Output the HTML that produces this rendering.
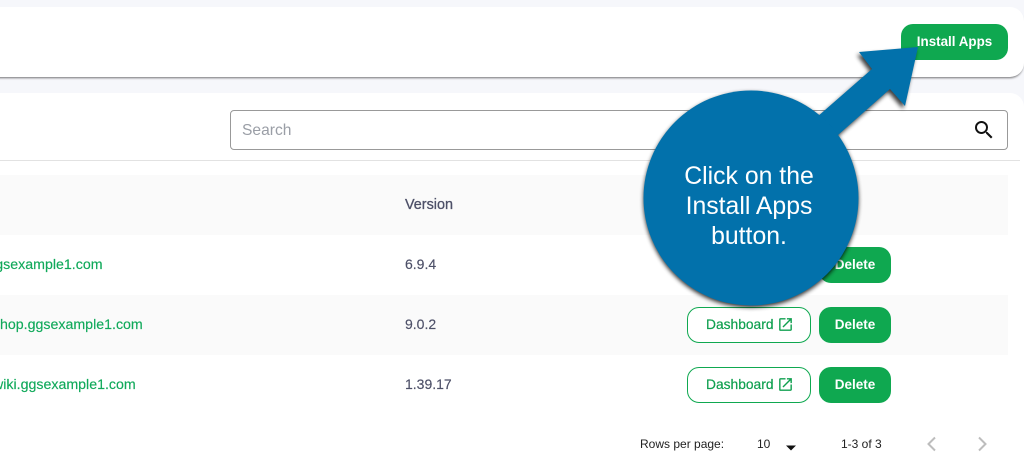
<!DOCTYPE html>
<html><head><meta charset="utf-8"><style>
html,body{margin:0;padding:0}
body{width:1024px;height:456px;overflow:hidden;background:#f6f7fb;position:relative;font-family:"Liberation Sans",sans-serif;font-size:14px}
div,span{position:absolute;box-sizing:border-box;white-space:nowrap}
.card{background:#fff}
.row{left:0;width:1008px;height:60px}
.t{line-height:20px;height:20px}
.link{color:#10a95a;font-size:14.2px;-webkit-text-stroke:.15px #10a95a}
.ver{left:405px;color:#4d5068;font-size:14px;-webkit-text-stroke:.15px #4d5068}
.btn{background:#0fa850;color:#fff;font-weight:bold;border-radius:12px;text-align:center;font-size:13.5px;line-height:36px;height:36px}
.dash{left:687px;width:124px;height:36px;border:1px solid #0fa850;border-radius:12px;color:#10a050;font-size:13.8px;line-height:33px;padding-left:18px;background:#fff;-webkit-text-stroke:.2px #10a050}
.del{left:819px;width:72px}
</style></head><body>
<div class="card" style="left:-20px;top:7px;width:1044px;height:70px;border-radius:14px;box-shadow:0 2px 2px -1px rgba(0,0,0,.55)"></div>
<div class="btn" style="left:901px;top:24px;width:107px;font-size:13.4px">Install Apps</div>
<div class="card" style="left:-20px;top:93px;width:1044px;height:363px;border-radius:14px 14px 0 0"></div>
<div style="left:230px;top:110px;width:778px;height:40px;border:1px solid #999;border-radius:4px"></div>
<div class="t" style="left:242px;top:121px;font-size:15.6px;color:#9a9ea6;line-height:20px">Search</div>
<svg style="position:absolute;left:972px;top:118px" width="24" height="24" viewBox="0 0 24 24"><path d="M15.5 14h-.79l-.28-.27A6.47 6.47 0 0 0 16 9.5 6.5 6.5 0 1 0 9.5 16c1.61 0 3.09-.59 4.23-1.57l.27.28v.79l5 4.99L20.49 19l-4.99-5zm-6 0C7.01 14 5 11.99 5 9.5S7.01 5 9.5 5 14 7.01 14 9.5 11.99 14 9.5 14z" fill="#111"/></svg>
<div style="left:0;top:160px;width:1020px;height:1px;background:#e2e2e2"></div>
<div class="row" style="top:175px;background:#fafafa"></div>
<div class="row" style="top:295px;background:#fafafa"></div>
<div class="t ver" style="top:195px;font-size:14.4px;-webkit-text-stroke:.3px #4d5068">Version</div>
<div class="t link" style="left:-12.6px;top:255px">ggsexample1.com</div>
<div class="t link" style="left:0;top:315px">hop.ggsexample1.com</div>
<div class="t link" style="left:-7px;top:375px">wiki.ggsexample1.com</div>
<div class="t ver" style="top:254px">6.9.4</div>
<div class="t ver" style="top:314px">9.0.2</div>
<div class="t ver" style="top:374px">1.39.17</div>

<div class="dash" style="top:247px">Dashboard</div>
<div class="btn del" style="top:247px">Delete</div>
<div class="dash" style="top:307px">Dashboard</div>
<div class="btn del" style="top:307px">Delete</div>
<div class="dash" style="top:367px">Dashboard</div>
<div class="btn del" style="top:367px">Delete</div>
<svg style="position:absolute;left:777px;top:316px" width="17" height="17" viewBox="0 0 24 24"><path d="M19 19H5V5h7V3H5a2 2 0 0 0-2 2v14a2 2 0 0 0 2 2h14c1.1 0 2-.9 2-2v-7h-2v7zM14 3v2h3.59l-9.83 9.83 1.41 1.41L19 6.41V10h2V3h-7z" fill="#10a050"/></svg>
<svg style="position:absolute;left:777px;top:376px" width="17" height="17" viewBox="0 0 24 24"><path d="M19 19H5V5h7V3H5a2 2 0 0 0-2 2v14a2 2 0 0 0 2 2h14c1.1 0 2-.9 2-2v-7h-2v7zM14 3v2h3.59l-9.83 9.83 1.41 1.41L19 6.41V10h2V3h-7z" fill="#10a050"/></svg>

<div class="t" style="left:640px;top:434px;font-size:12px;color:#222">Rows per page:</div>
<div class="t" style="left:757px;top:434px;font-size:12px;color:#222">10</div>
<svg style="position:absolute;left:785px;top:445px" width="12" height="7" viewBox="0 0 12 7"><path d="M1 0.5h10L6 5.5z" fill="#111"/></svg>
<div class="t" style="left:841px;top:434px;font-size:12px;color:#222">1-3 of 3</div>
<svg style="position:absolute;left:924px;top:434px" width="16" height="20" viewBox="0 0 16 20"><path d="M11 3.5L4.5 10l6.5 6.5" fill="none" stroke="#bdbdbd" stroke-width="2"/></svg>
<svg style="position:absolute;left:974px;top:434px" width="16" height="20" viewBox="0 0 16 20"><path d="M5 3.5L11.5 10 5 16.5" fill="none" stroke="#bdbdbd" stroke-width="2"/></svg>

<svg style="position:absolute;left:0;top:0" width="1024" height="456" viewBox="0 0 1024 456">
<defs><filter id="s" x="-20%" y="-20%" width="140%" height="140%"><feGaussianBlur stdDeviation="2.2"/></filter></defs>
<path d="M859 52L918 47L905 106L890 89L838 135L820 115L872 69Z" fill="#000" opacity=".75" filter="url(#s)" transform="translate(-2 3)"/>
<circle cx="751" cy="198" r="107.5" fill="#000" opacity=".8" filter="url(#s)" transform="translate(0 2)"/>
<path d="M859 52L918 47L905 106L890 89L838 135L809 124L872 69Z" fill="#0271ab"/>
<circle cx="751" cy="198" r="107.5" fill="#0271ab"/>
<text x="749" y="184" text-anchor="middle" font-family="Liberation Sans, sans-serif" font-size="24.8" fill="#fff">Click on the</text>
<text x="749" y="214" text-anchor="middle" font-family="Liberation Sans, sans-serif" font-size="24.8" fill="#fff">Install Apps</text>
<text x="749" y="244" text-anchor="middle" font-family="Liberation Sans, sans-serif" font-size="24.8" fill="#fff">button.</text>
</svg>
</body></html>
